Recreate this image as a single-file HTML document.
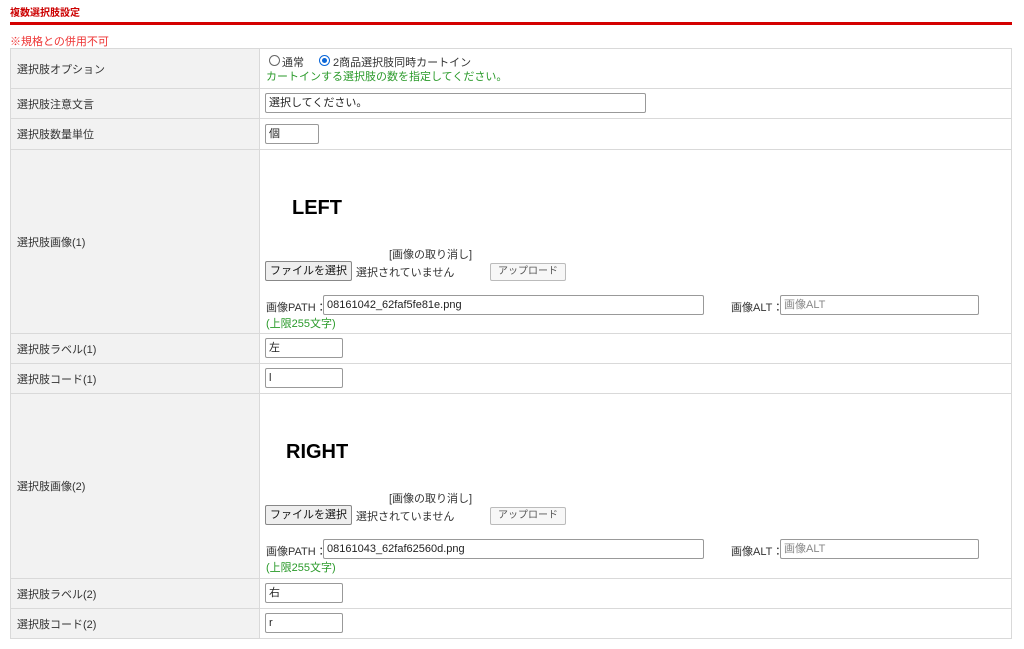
<!DOCTYPE html>
<html><head><meta charset="utf-8"><style>
*{box-sizing:border-box;margin:0;padding:0}
body{width:1024px;height:649px;background:#fff;font-family:"Liberation Sans","Noto Sans CJK JP",sans-serif;font-size:11px;color:#333;position:relative;overflow:hidden}
.a{position:absolute;white-space:nowrap}
.lab{position:absolute;left:10px;width:250px;background:#f2f2f2;border:1px solid #d9d9d9;border-right:1px solid #d9d9d9;padding-left:6px;display:flex;align-items:center}
.val{position:absolute;left:260px;width:752px;border:1px solid #d9d9d9;border-left:none}
.in{position:absolute;border:1px solid #999;border-radius:2px;background:#fff;height:20px;padding-left:3px;line-height:18px;font-size:11px;color:#222}
.btn{position:absolute;border:1px solid #888;background:#eee;border-radius:2px;font-size:11px;text-align:center;color:#111}
.g{color:#2a9a2a}
</style></head><body>
<div class="a" style="left:10px;top:4px;font-weight:bold;color:#c00;font-size:10px">複数選択肢設定</div>
<div class="a" style="left:10px;top:22px;width:1002px;height:3px;background:#d40000"></div>
<div class="a" style="left:10px;top:33px;color:#e33;font-size:11px">※規格との併用不可</div>

<div class="lab" style="top:48px;height:41px">選択肢オプション</div><div class="val" style="top:48px;height:41px"></div>
<div class="lab" style="top:88px;height:31px">選択肢注意文言</div><div class="val" style="top:88px;height:31px"></div>
<div class="lab" style="top:118px;height:32px">選択肢数量単位</div><div class="val" style="top:118px;height:32px"></div>
<div class="lab" style="top:149px;height:185px">選択肢画像(1)</div><div class="val" style="top:149px;height:185px"></div>
<div class="lab" style="top:333px;height:31px">選択肢ラベル(1)</div><div class="val" style="top:333px;height:31px"></div>
<div class="lab" style="top:363px;height:31px">選択肢コード(1)</div><div class="val" style="top:363px;height:31px"></div>
<div class="lab" style="top:393px;height:186px">選択肢画像(2)</div><div class="val" style="top:393px;height:186px"></div>
<div class="lab" style="top:578px;height:31px">選択肢ラベル(2)</div><div class="val" style="top:578px;height:31px"></div>
<div class="lab" style="top:608px;height:31px">選択肢コード(2)</div><div class="val" style="top:608px;height:31px"></div>

<div class="a" style="left:269px;top:55px;width:11px;height:11px;border:1px solid #666;border-radius:50%"></div>
<div class="a" style="left:282px;top:54px">通常</div>
<div class="a" style="left:319px;top:55px;width:11px;height:11px;border:1px solid #0a66d8;border-radius:50%"><div style="margin:2px;width:5px;height:5px;border-radius:50%;background:#0a66d8"></div></div>
<div class="a" style="left:333px;top:54px">2商品選択肢同時カートイン</div>
<div class="a g" style="left:266px;top:68px">カートインする選択肢の数を指定してください。</div>

<div class="in" style="left:265px;top:93px;width:381px">選択してください。</div>
<div class="in" style="left:265px;top:124px;width:54px">個</div>

<div class="a" style="left:292px;top:197px;font-weight:bold;font-size:20px;color:#000">LEFT</div>
<div class="a" style="left:389px;top:246px">[画像の取り消し]</div>
<div class="btn" style="left:265px;top:261px;width:87px;height:20px;line-height:18px">ファイルを選択</div>
<div class="a" style="left:356px;top:264px">選択されていません</div>
<div class="btn" style="left:490px;top:263px;width:76px;height:18px;line-height:16px;border-color:#bbb;background:#f7f7f7;font-size:10px;color:#555">アップロード</div>
<div class="a" style="left:266px;top:299px">画像PATH：</div>
<div class="in" style="left:323px;top:295px;width:381px">08161042_62faf5fe81e.png</div>
<div class="a" style="left:731px;top:299px">画像ALT：</div>
<div class="in" style="left:780px;top:295px;width:199px;color:#888">画像ALT</div>
<div class="a g" style="left:266px;top:315px">(上限255文字)</div>

<div class="in" style="left:265px;top:338px;width:78px">左</div>
<div class="in" style="left:265px;top:368px;width:78px">l</div>

<div class="a" style="left:286px;top:441px;font-weight:bold;font-size:20px;color:#000">RIGHT</div>
<div class="a" style="left:389px;top:490px">[画像の取り消し]</div>
<div class="btn" style="left:265px;top:505px;width:87px;height:20px;line-height:18px">ファイルを選択</div>
<div class="a" style="left:356px;top:508px">選択されていません</div>
<div class="btn" style="left:490px;top:507px;width:76px;height:18px;line-height:16px;border-color:#bbb;background:#f7f7f7;font-size:10px;color:#555">アップロード</div>
<div class="a" style="left:266px;top:543px">画像PATH：</div>
<div class="in" style="left:323px;top:539px;width:381px">08161043_62faf62560d.png</div>
<div class="a" style="left:731px;top:543px">画像ALT：</div>
<div class="in" style="left:780px;top:539px;width:199px;color:#888">画像ALT</div>
<div class="a g" style="left:266px;top:559px">(上限255文字)</div>

<div class="in" style="left:265px;top:583px;width:78px">右</div>
<div class="in" style="left:265px;top:613px;width:78px">r</div>
</body></html>
